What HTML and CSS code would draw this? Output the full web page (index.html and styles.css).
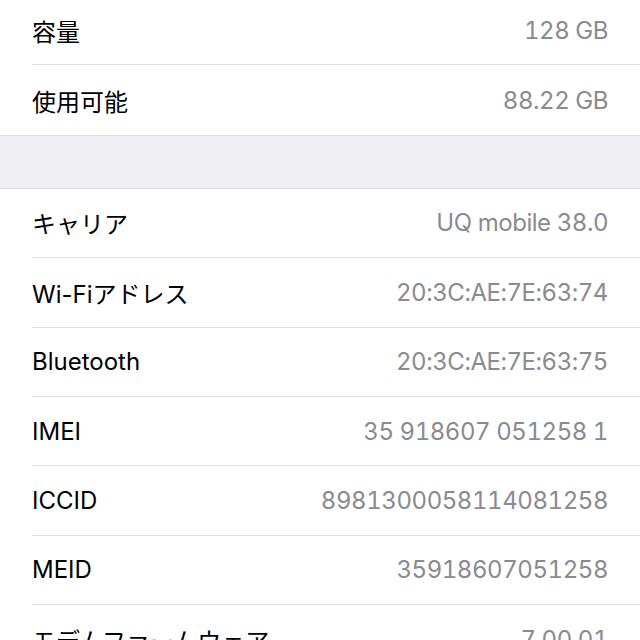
FILE: index.html
```html
<!DOCTYPE html>
<html lang="ja">
<head>
  <meta charset="UTF-8">
  <meta name="viewport" content="width=device-width, initial-scale=1.0">
  <title>情報</title>
  <link rel="stylesheet" href="styles.css">
</head>
<body>
  <div class="group group-top">
    <div class="row"><span class="label">容量</span><span class="value">128 GB</span></div>
    <div class="row"><span class="label">使用可能</span><span class="value">88.22 GB</span></div>
  </div>
  <div class="spacer"></div>
  <div class="group">
    <div class="row"><span class="label">キャリア</span><span class="value">UQ mobile 38.0</span></div>
    <div class="row"><span class="label">Wi-Fiアドレス</span><span class="value">20:3C:AE:7E:63:74</span></div>
    <div class="row"><span class="label">Bluetooth</span><span class="value">20:3C:AE:7E:63:75</span></div>
    <div class="row"><span class="label">IMEI</span><span class="value">35 918607 051258 1</span></div>
    <div class="row"><span class="label">ICCID</span><span class="value">8981300058114081258</span></div>
    <div class="row"><span class="label">MEID</span><span class="value">35918607051258</span></div>
    <div class="row"><span class="label">モデムファームウェア</span><span class="value">7.00.01</span></div>
  </div>
</body>
</html>
```

FILE: styles.css
```css
/* iOS settings list */
body {
  margin: 0;
  background: #ffffff;
  font-family: "Inter", "Noto Sans CJK JP", sans-serif;
  overflow: hidden;
}
.group { background: #ffffff; }
.group-top { margin-top: -4px; }
.row {
  display: flex;
  align-items: center;
  justify-content: space-between;
  box-sizing: border-box;
  height: 69.4px;
  margin-left: 32px;
  padding-right: 32px;
  border-bottom: 1px solid #e1e1e4;
  font-size: 24px;
}
.group .row:last-child { border-bottom: none; }
.label { color: #000000; }
.value {
  color: #8a8a8f;
  font-variant-numeric: tabular-nums;
  letter-spacing: -0.45px;
}
.spacer {
  height: 52px;
  background: #efeff4;
  border-top: 1px solid #dcdce0;
  border-bottom: 1px solid #dcdce0;
}
```
